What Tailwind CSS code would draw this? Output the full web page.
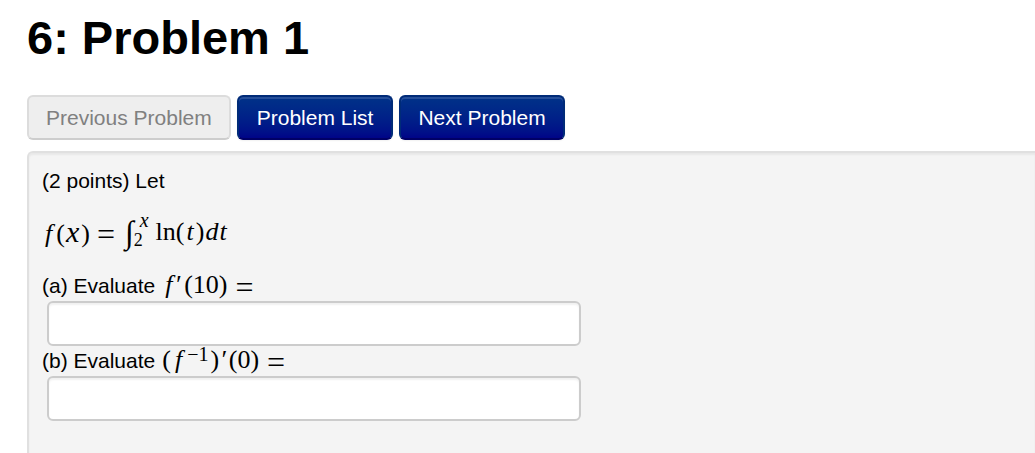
<!DOCTYPE html>
<html lang="en">
<head>
<meta charset="utf-8">
<title>6: Problem 1</title>
<script src="https://cdn.jsdelivr.net/npm/@tailwindcss/browser@4"></script>
</head>
<body class="bg-white text-black text-[21px] leading-[30px] font-['Liberation_Sans',Arial,sans-serif]">
<main class="pl-[27px] pt-2 flex flex-col min-h-screen">
  <h1 class="text-[47px] leading-[60px] font-bold">6: Problem 1</h1>
  <nav class="mt-[27px] flex gap-[6px]" aria-label="Problems">
    <button type="button" disabled class="h-[45px] px-[17px] rounded-md border-2 border-[#dcdcdc] border-b-[#cdcdcd] bg-[#eeeeee] text-[#808080] whitespace-nowrap">Previous Problem</button>
    <button type="button" class="h-[45px] px-[18px] rounded-md border-2 border-[#002b78] border-b-[#000066] bg-linear-to-b from-[#003388] to-[#000088] bg-origin-border text-white whitespace-nowrap shadow-[inset_0_2px_0_rgba(255,255,255,0.15),0_1px_2px_rgba(0,0,0,0.06)]">Problem List</button>
    <button type="button" class="h-[45px] px-[17px] rounded-md border-2 border-[#002b78] border-b-[#000066] bg-linear-to-b from-[#003388] to-[#000088] bg-origin-border text-white whitespace-nowrap shadow-[inset_0_2px_0_rgba(255,255,255,0.15),0_1px_2px_rgba(0,0,0,0.06)]">Next Problem</button>
  </nav>
  <form class="mt-[11px] grow border-l-2 border-t-2 border-[#e0e0e0] rounded-tl-md bg-[#f4f4f4] pl-[13px] pt-[13px] pb-8 shadow-[inset_0_2px_2px_rgba(0,0,0,0.05)]">
    <p>(2 points) Let</p>
    <p class="mt-5 h-8 leading-8 flex text-[26px] font-['Liberation_Serif',serif]">
      <span class="flex gap-px pl-[3px] items-baseline"><i>f</i><span class="ml-[3px]">(</span><i class="text-[30px]">x</i><span class="ml-px">)</span></span>
      <span class="ml-[7px] text-[32px] self-end leading-7">=</span>
      <i class="ml-[10px] text-[32px]">∫</i>
      <span class="flex flex-col justify-between text-[18px] leading-4 -mt-1"><i class="ml-[6px] text-[20px]">x</i><span>2</span></span>
      <span class="ml-[7px] flex gap-px"><span>ln(</span><i class="ml-px">t</i><span class="ml-px">)</span><i>d</i><i>t</i></span>
    </p>
    <label for="answer-a" class="mt-[23px] h-[30px] flex items-baseline">(a) Evaluate
      <span class="ml-[10px] flex gap-px text-[26px] leading-6 font-['Liberation_Serif',serif]"><i>f</i><i class="ml-px">′</i><span class="ml-[3px]">(10)</span></span>
      <span class="ml-2 text-[32px] self-end leading-7 font-['Liberation_Serif',serif]">=</span>
    </label>
    <input id="answer-a" type="text" class="block ml-[5px] w-[534px] max-w-full h-[45px] px-2 rounded-md border-2 border-[#cccccc] bg-white shadow-[inset_0_2px_2px_rgba(0,0,0,0.06)]">
    <label for="answer-b" class="h-[30px] flex items-baseline">(b) Evaluate
      <span class="ml-[7px] flex gap-px text-[26px] leading-6 font-['Liberation_Serif',serif]"><span>(</span><i class="ml-[3px]">f</i><span class="ml-1 text-[20px] leading-3 self-start">−1</span><span class="ml-px">)</span><i>′</i><span class="ml-[2px]">(0)</span></span>
      <span class="ml-2 text-[32px] self-end leading-7 font-['Liberation_Serif',serif]">=</span>
    </label>
    <input id="answer-b" type="text" class="block ml-[5px] w-[534px] max-w-full h-[45px] px-2 rounded-md border-2 border-[#cccccc] bg-white shadow-[inset_0_2px_2px_rgba(0,0,0,0.06)]">
  </form>
</main>
</body>
</html>
